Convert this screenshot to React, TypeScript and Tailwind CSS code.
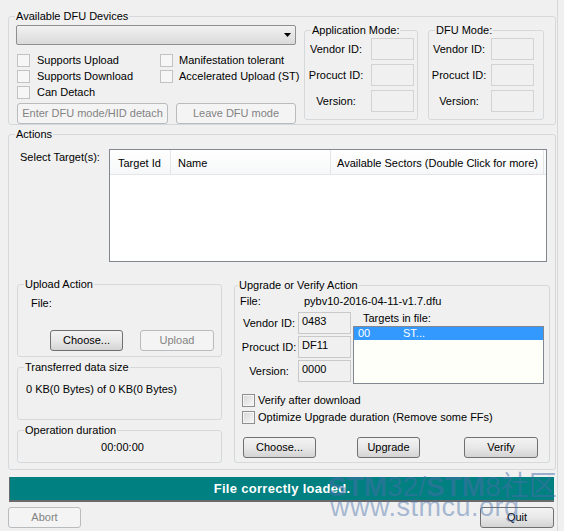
import type { ReactNode } from "react";

const BTN =
  "h-[21px] shrink-0 rounded-[3px] border border-[#707070] bg-linear-to-b from-[#f3f3f3] via-[#e8e8e8] to-[#d4d4d4] text-center leading-[19px]";
const BTN_DISABLED =
  "h-[21px] shrink-0 rounded-[3px] border border-[#b8bcbf] bg-[#f4f4f4] text-center leading-[19px] text-[#838383]";

const GroupBox = ({
  label,
  className = "",
  labelLeft = "left-[6px]",
  children,
}: {
  label: string;
  className?: string;
  labelLeft?: string;
  children?: ReactNode;
}) => (
  <div className={`relative shrink-0 rounded-[3px] border border-[#d5d9dc] ${className}`}>
    <span className={`absolute -top-[7px] ${labelLeft} bg-[#f0f0f0] px-[1px] leading-[13px] whitespace-nowrap`}>
      {label}
    </span>
    {children}
  </div>
);

const CheckBox = ({ disabled = false }: { disabled?: boolean }) => (
  <span
    className={`block size-[13px] shrink-0 border ${
      disabled
        ? "border-[#c2c2c2] bg-[#f6f6f6]"
        : "border-[#8e8f8f] bg-linear-to-br from-[#d6d6d6] to-[#f9f9f9] shadow-[inset_0_0_0_1px_#f4f4f4]"
    }`}
  />
);

const CheckRow = ({ label, disabled, gap }: { label: string; disabled?: boolean; gap: string }) => (
  <div className="flex h-[16px] items-center">
    <span className="ml-[1px]">
      <CheckBox disabled={disabled} />
    </span>
    <span className={`${gap} whitespace-nowrap`}>{label}</span>
  </div>
);

const MODE_LABELS = ["Vendor ID:", "Procuct ID:", "Version:"];

const ModeFields = ({ labelClass }: { labelClass: string }) => (
  <div className="flex flex-col gap-[4px] pt-[7px]">
    {MODE_LABELS.map((l) => (
      <div key={l} className="flex items-center">
        <span className={`${labelClass} text-center whitespace-nowrap`}>{l}</span>
        <span className="h-[22px] w-[43px] border border-[#d3d3d3]" />
      </div>
    ))}
  </div>
);

const UPGRADE_FIELDS = [
  { label: "Vendor ID:", value: "0483" },
  { label: "Procuct ID:", value: "DF11" },
  { label: "Version:", value: "0000" },
];

export default function App() {
  return (
    <div className="relative h-[531px] w-[564px] overflow-hidden bg-[#f0f0f0] font-['Liberation_Sans',Arial,sans-serif] text-[11px] leading-[13px] text-black">
      <div className="flex h-full w-[558px] flex-col border-r border-[#d8d8d8] pl-[8px] pt-[16px]">
        {/* Available DFU Devices */}
        <GroupBox label="Available DFU Devices" className="h-[109px] w-[548px]">
          <div className="flex pl-[7px] pt-[8px]">
            <div className="flex w-[280px] flex-col">
              <div className="flex h-[20px] items-center justify-end rounded-[2px] border border-[#8e8f8f] bg-linear-to-b from-[#f2f2f2] to-[#dadada] pr-[4px]">
                <svg width="7" height="4" viewBox="0 0 7 4">
                  <path d="M0 0h7L3.5 4z" fill="#000" />
                </svg>
              </div>
              <div className="mt-[7px] grid grid-cols-[143px_1fr]">
                <CheckRow label="Supports Upload" disabled gap="ml-[7px]" />
                <CheckRow label="Manifestation tolerant" disabled gap="ml-[6px]" />
                <CheckRow label="Supports Download" disabled gap="ml-[7px]" />
                <CheckRow label="Accelerated Upload (ST)" disabled gap="ml-[6px]" />
                <CheckRow label="Can Detach" disabled gap="ml-[7px]" />
              </div>
              <div className="mt-[3px] flex">
                <div className={`${BTN_DISABLED} ml-[1px] w-[151px]`}>Enter DFU mode/HID detach</div>
                <div className={`${BTN_DISABLED} ml-[8px] w-[120px]`}>Leave DFU mode</div>
              </div>
            </div>
            <GroupBox label="Application Mode:" className="ml-[8px] mt-[5px] h-[90px] w-[114px]">
              <ModeFields labelClass="mr-[4px] w-[62px]" />
            </GroupBox>
            <GroupBox label="DFU Mode:" className="ml-[10px] mt-[5px] h-[90px] w-[116px]">
              <ModeFields labelClass="mr-[2px] w-[60px]" />
            </GroupBox>
          </div>
        </GroupBox>

        {/* Actions */}
        <GroupBox label="Actions" className="mt-[9px] h-[336px] w-[548px]">
          <div className="flex pt-[14px]">
            <span className="ml-[11px] mt-[2px] w-[89px] whitespace-nowrap">Select Target(s):</span>
            <div className="h-[113px] w-[438px] border border-[#828790] bg-white">
              <div className="flex h-[25px] border-b border-[#e5e5e5] bg-linear-to-b from-white to-[#f6f7f8]">
                <div className="flex w-[61px] items-center border-r border-[#e5e5e5] pl-[8px] pt-[3px]">Target Id</div>
                <div className="flex w-[160px] items-center border-r border-[#e5e5e5] pl-[7px] pt-[3px]">Name</div>
                <div className="flex w-[213px] items-center border-r border-[#e5e5e5] pl-[6px] pt-[3px] whitespace-nowrap">
                  Available Sectors (Double Click for more)
                </div>
              </div>
            </div>
          </div>

          <div className="mt-[22px] flex">
            <div className="ml-[8px] flex w-[205px] flex-col">
              <GroupBox label="Upload Action" className="h-[73px]">
                <div className="flex flex-col pl-[13px] pt-[12px]">
                  <span>File:</span>
                  <div className="ml-[19px] mt-[20px] flex">
                    <div className={`${BTN} w-[73px]`}>Choose...</div>
                    <div className={`${BTN_DISABLED} ml-[17px] w-[74px]`}>Upload</div>
                  </div>
                </div>
              </GroupBox>
              <GroupBox label="Transferred data size" className="mt-[10px] h-[53px]">
                <div className="pl-[8px] pt-[15px]">0 KB(0 Bytes) of 0 KB(0 Bytes)</div>
              </GroupBox>
              <GroupBox label="Operation duration" className="mt-[10px] h-[33px]">
                <div className="pl-[6px] pt-[10px] text-center">00:00:00</div>
              </GroupBox>
            </div>

            <GroupBox
              label="Upgrade or Verify Action"
              labelLeft="left-[3px]"
              className="ml-[12px] mt-[1px] h-[178px] w-[316px]"
            >
              <div className="flex flex-col pl-[5px] pt-[9px]">
                <div className="flex">
                  <span className="w-[64px]">File:</span>
                  <span>pybv10-2016-04-11-v1.7.dfu</span>
                </div>
                <div className="mt-[4px] flex">
                  <div className="flex flex-col gap-[2px]">
                    {UPGRADE_FIELDS.map((f) => (
                      <div key={f.label} className="flex items-center">
                        <span className="w-[58px] text-center whitespace-nowrap">{f.label}</span>
                        <span className="h-[22px] w-[53px] border border-[#c9c9c9] pl-[3px] pt-[2px]">{f.value}</span>
                      </div>
                    ))}
                  </div>
                  <div className="ml-[2px] flex flex-col">
                    <span className="pl-[10px]">Targets in file:</span>
                    <div className="mt-[1px] h-[58px] w-[191px] border border-[#828790] bg-[#fffffa]">
                      <div className="flex h-[13px] bg-[#3399ff] text-white">
                        <span className="w-[49px] pl-[4px]">00</span>
                        <span>ST...</span>
                      </div>
                    </div>
                  </div>
                </div>
                <div className="mt-[8px] flex flex-col">
                  <div className="flex h-[17px] items-center">
                    <span className="ml-[2px]">
                      <CheckBox />
                    </span>
                    <span className="ml-[3px]">Verify after download</span>
                  </div>
                  <div className="flex h-[17px] items-center">
                    <span className="ml-[2px]">
                      <CheckBox />
                    </span>
                    <span className="ml-[3px] whitespace-nowrap">Optimize Upgrade duration (Remove some FFs)</span>
                  </div>
                </div>
                <div className="mt-[11px] flex">
                  <div className={`${BTN} ml-[3px] w-[73px]`}>Choose...</div>
                  <div className={`${BTN} ml-[41px] w-[63px]`}>Upgrade</div>
                  <div className={`${BTN} ml-[44px] w-[74px]`}>Verify</div>
                </div>
              </div>
            </GroupBox>
          </div>
        </GroupBox>

        {/* status */}
        <div className="ml-[1px] mt-[7px] flex h-[25px] w-[545px] shrink-0 items-center justify-center border-b-2 border-l border-[#6a6a6a] bg-[#008080] text-[13px] font-bold tracking-[0.3px] text-white">
          File correctly loaded.
        </div>

        <div className="mt-[5px] flex w-[546px] justify-between">
          <div className={`${BTN_DISABLED} w-[73px]`}>Abort</div>
          <div className={`${BTN} w-[74px]`}>Quit</div>
        </div>
      </div>

      {/* watermark */}
      <div className="pointer-events-none absolute left-[328px] top-[472px] whitespace-nowrap font-['Liberation_Sans','Noto_Sans_CJK_SC',sans-serif] text-[28px] leading-[29px] text-[rgba(70,110,170,0.5)]">
        <span className="font-bold">STM</span>32/<span className="font-bold">STM</span>8社区
      </div>
      <div className="pointer-events-none absolute left-[330px] top-[494px] whitespace-nowrap font-['Liberation_Sans',sans-serif] text-[27px] leading-[27px] tracking-[0.5px] text-[rgba(70,110,170,0.45)]">
        www.stmcu.org
      </div>
    </div>
  );
}
